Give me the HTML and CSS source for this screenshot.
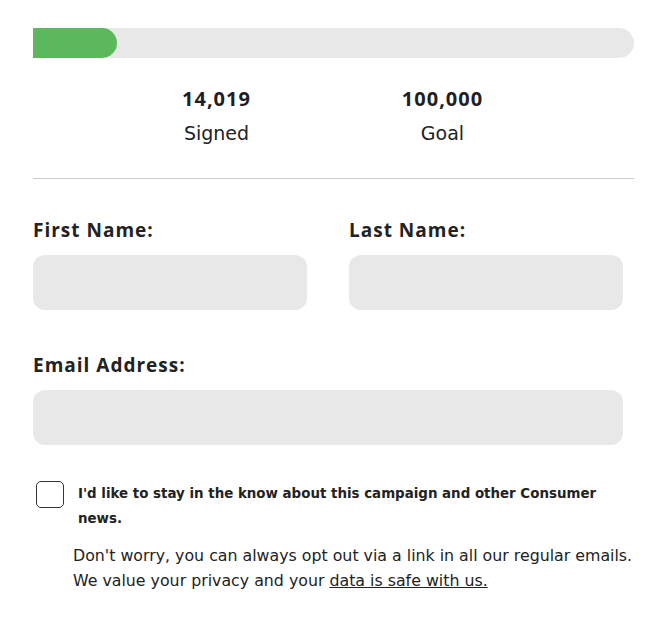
FILE: index.html
```html
<!DOCTYPE html>
<html lang="en">
<head>
<meta charset="utf-8">
<link rel="stylesheet" href="styles.css">
</head>
<body>
<div class="petition">
  <div class="progress"><div class="progress-fill" style="width: 14%"></div></div>
  <div class="stats">
    <div class="stat"><div class="stat-num">14,019</div><div class="stat-label">Signed</div></div>
    <div class="stat"><div class="stat-num">100,000</div><div class="stat-label">Goal</div></div>
  </div>
  <hr class="divider">
  <form class="form">
    <div class="row">
      <div class="field"><label class="label">First Name:</label><input class="input" type="text"></div>
      <div class="field"><label class="label">Last Name:</label><input class="input" type="text"></div>
    </div>
    <div class="field full"><label class="label">Email Address:</label><input class="input" type="email"></div>
    <div class="consent">
      <span class="checkbox"></span>
      <span class="consent-text">I'd like to stay in the know about this campaign and other Consumer news.</span>
    </div>
    <p class="note">Don't worry, you can always opt out via a link in all our regular emails. We value your privacy and your <a class="link" href="#">data is safe with us.</a></p>
  </form>
</div>
</body>
</html>
```
FILE: styles.css
```css
* { box-sizing: border-box; }
body { margin: 0; background: #fff; color: #222; font-family: "DejaVu Sans", "Open Sans", sans-serif; }
.petition { width: 601px; margin: 28px 0 0 33px; }
.progress { height: 30px; background: #e8e8e8; border-radius: 0 15px 15px 0; overflow: hidden; }
.progress-fill { height: 100%; background: #5cb85c; border-radius: 0 15px 15px 0; }
.stats { display: flex; justify-content: center; padding-right: 8px; margin-top: 27px; }
.stat { width: 226px; text-align: center; }
.stat-num { font-family: "Open Sans", sans-serif; font-weight: 700; font-size: 20px; letter-spacing: 1px; line-height: 28px; color: #1e1e24; }
.stat-label { font-size: 19px; line-height: 30px; margin-top: 5px; color: #222; }
.divider { border: 0; border-top: 1px solid #ccc; margin: 30px 0 0; }
.form { margin-top: 38px; }
.row { display: flex; gap: 42px; margin-right: 11px; }
.row .field { flex: 1; }
.label { display: block; font-family: "Open Sans", sans-serif; font-weight: 700; font-size: 19px; letter-spacing: 1px; line-height: 26px; color: #222; }
.input { display: block; width: 100%; height: 55px; margin-top: 12px; border: 0; border-radius: 12px; background: #e8e8e8; }
.full { margin-top: 42px; margin-right: 11px; }
.consent { display: flex; align-items: flex-start; margin-top: 36px; padding-left: 3px; margin-right: 11px; }
.checkbox { flex: none; width: 28px; height: 27px; border: 1px solid #333; border-radius: 5px; }
.consent-text { margin-left: 14px; font-size: 13.4px; font-weight: 700; line-height: 25px; color: #222; }
.note { margin: 12px 0 0 40px; font-size: 15.8px; line-height: 25px; color: #222; }
.link { color: #222; text-decoration: underline; }
```
